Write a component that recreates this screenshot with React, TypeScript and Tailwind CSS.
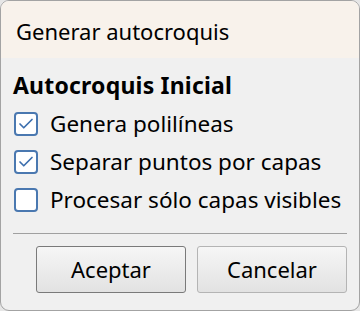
import { Check } from "lucide-react";

const options = [
  { label: "Genera polilíneas", checked: true },
  { label: "Separar puntos por capas", checked: true },
  { label: "Procesar sólo capas visibles", checked: false },
];

function CheckBox({ checked }: { checked: boolean }) {
  return (
    <span className="flex h-[24px] w-[24px] shrink-0 items-center justify-center rounded-[4px] border-2 border-[#4a78b0] bg-white">
      {checked && <Check className="h-[18px] w-[18px] text-[#3d6fae]" strokeWidth={2.25} />}
    </span>
  );
}

export default function App() {
  return (
    <div className="h-[311px] w-[360px] bg-[#e6e6e6] font-['Noto_Sans',sans-serif] text-black">
      <div className="flex h-full w-full flex-col overflow-hidden rounded-[9px] border border-[#a3a3a3] bg-[#f0f0f0]">
        {/* title bar */}
        <div className="flex h-[57px] shrink-0 items-center bg-[#f8f2eb] pl-[15px] pt-[2px] text-[22px] leading-[28px]">
          Generar autocroquis
        </div>

        <div className="flex flex-1 flex-col px-[12px]">
          <div className="mt-[12px] text-[23px] font-bold leading-[30px] tracking-[0.2px]">Autocroquis Inicial</div>

          <div className="mt-[5px] flex flex-col">
            {options.map((o) => (
              <label key={o.label} className="flex h-[38px] items-center gap-[12px] pl-[1px] text-[22.5px] leading-[28px]">
                <CheckBox checked={o.checked} />
                <span>{o.label}</span>
              </label>
            ))}
          </div>

          <div className="mt-[14px] h-px bg-[#a0a0a0]" />

          <div className="mt-[12px] flex justify-end gap-[11px]">
            <button className="h-[47px] w-[150px] rounded-[3px] border border-[#7a7a7a] bg-gradient-to-b from-[#f6f6f6] to-[#e2e2e2] text-[22px]">
              Aceptar
            </button>
            <button className="h-[47px] w-[150px] rounded-[3px] border border-[#b4b4b4] bg-gradient-to-b from-[#f6f6f6] to-[#e2e2e2] text-[22px]">
              Cancelar
            </button>
          </div>
        </div>
      </div>
    </div>
  );
}
